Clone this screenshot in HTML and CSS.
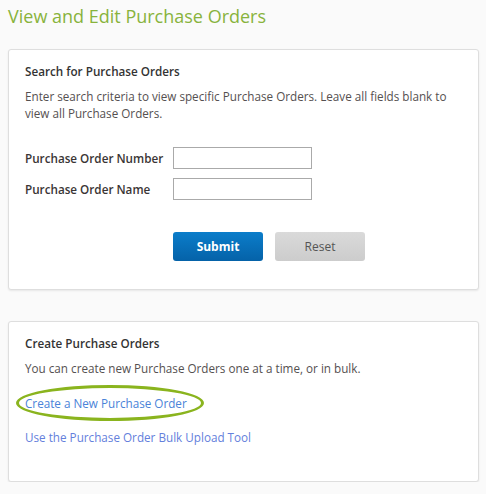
FILE: index.html
```html
<!DOCTYPE html>
<html lang="en">
<head>
<meta charset="utf-8">
<title>View and Edit Purchase Orders</title>
<link rel="stylesheet" href="styles.css">
</head>
<body>
<main class="page">
  <h1 class="page-title">View and Edit Purchase Orders</h1>

  <section class="card card-search">
    <h2 class="card-title">Search for Purchase Orders</h2>
    <p class="card-text">Enter search criteria to view specific Purchase Orders. Leave all fields blank to view all Purchase Orders.</p>
    <form class="search-form">
      <div class="field-row">
        <label class="field-label" for="po-number">Purchase Order Number</label>
        <input class="field-input" id="po-number" type="text">
      </div>
      <div class="field-row">
        <label class="field-label" for="po-name">Purchase Order Name</label>
        <input class="field-input" id="po-name" type="text">
      </div>
      <div class="actions">
        <button class="btn btn-primary" type="button">Submit</button>
        <button class="btn btn-secondary" type="button">Reset</button>
      </div>
    </form>
  </section>

  <section class="card card-create">
    <h2 class="card-title">Create Purchase Orders</h2>
    <p class="card-text">You can create new Purchase Orders one at a time, or in bulk.</p>
    <ul class="link-list">
      <li><a class="link link-highlight" href="#">Create a New Purchase Order</a></li>
      <li><a class="link link-visited" href="#">Use the Purchase Order Bulk Upload Tool</a></li>
    </ul>
  </section>
</main>
</body>
</html>
```
FILE: styles.css
```css
*, *::before, *::after { box-sizing: border-box; }

html, body {
  margin: 0;
  padding: 0;
  background: #fafafa;
}

body {
  font-family: "Open Sans", "Liberation Sans", sans-serif;
  font-size: 11.7px;
  color: #4a4444;
}

.page {
  padding: 4px 7px 0 8px;
  display: flex;
  flex-direction: column;
}

.page-title {
  margin: 0 0 21px 0;
  font-size: 18px;
  font-weight: 400;
  line-height: 24px;
  color: #88b33c;
}

.card {
  background: #fff;
  border: 1px solid #dedede;
  border-radius: 3px;
  box-shadow: 0 1px 2px rgba(0, 0, 0, 0.08);
  padding: 13px 16px 28px 16px;
}

.card-search {
  height: 241px;
  margin-bottom: 31px;
}

.card-create {
  height: 161px;
}

.card-title {
  margin: 0 0 8px 0;
  font-size: 11.7px;
  font-weight: 600;
  line-height: 17px;
  color: #333;
}

.card-text {
  margin: 0;
  line-height: 17px;
  color: #555050;
}

.search-form {
  margin-top: 25px;
  display: flex;
  flex-direction: column;
  gap: 9px;
}

.field-row {
  display: grid;
  grid-template-columns: 148px 139px;
  align-items: center;
}

.field-label {
  font-weight: 600;
  color: #3a3535;
  white-space: nowrap;
}

.field-input {
  width: 139px;
  height: 22px;
  border: 1px solid #aaa;
  border-radius: 0;
  background: #fff;
  font: inherit;
  padding: 0 4px;
}

.actions {
  display: flex;
  gap: 12px;
  margin: 23px 0 0 148px;
}

.btn {
  width: 90px;
  height: 29px;
  border: none;
  border-radius: 3px;
  font-family: inherit;
  font-size: 12px;
  padding: 0;
}

.btn-primary {
  background: linear-gradient(#0b7dca, #0562a8);
  color: #fff;
  font-weight: 700;
}

.btn-secondary {
  background: linear-gradient(#dadada, #cccccc);
  color: #555;
  font-weight: 400;
}

.link-list {
  list-style: none;
  margin: 18px 0 0 0;
  padding: 0;
  display: flex;
  flex-direction: column;
  gap: 17px;
}

.link {
  font-size: 11.7px;
  line-height: 17px;
  text-decoration: none;
  color: #4a83d8;
}

.link-visited {
  color: #6480dc;
}

.link-highlight {
  position: relative;
  display: inline-block;
}

.link-highlight::after {
  content: "";
  position: absolute;
  left: -9px;
  top: -10px;
  width: 188px;
  height: 36px;
  border: 3px solid #8ab41e;
  border-radius: 50%;
  pointer-events: none;
}
```
